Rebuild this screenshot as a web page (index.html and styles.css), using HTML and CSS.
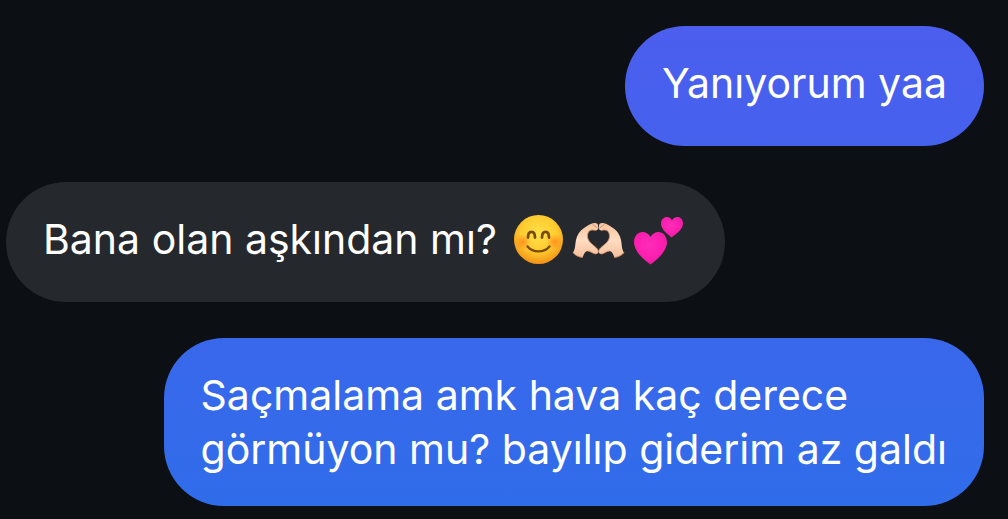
FILE: index.html
```html
<!DOCTYPE html>
<html lang="tr">
<head>
<meta charset="UTF-8">
<meta name="viewport" content="width=device-width, initial-scale=1.0">
<title>Chat</title>
<link rel="stylesheet" href="styles.css">
</head>
<body>
<main class="chat">
  <p class="bubble sent">Yanıyorum yaa</p>
  <p class="bubble received">Bana olan aşkından mı?
    <span class="emojis">
      <svg class="emoji" viewBox="0 2 60 56" role="img" aria-label="smiling face">
        <defs>
          <radialGradient id="face" cx="50%" cy="38%" r="62%">
            <stop offset="0" stop-color="#ffe04a"/>
            <stop offset="0.6" stop-color="#ffcb2e"/>
            <stop offset="1" stop-color="#f09216"/>
          </radialGradient>
          <radialGradient id="blush">
            <stop offset="0" stop-color="#ff7a1c" stop-opacity="0.7"/>
            <stop offset="1" stop-color="#ff7a1c" stop-opacity="0"/>
          </radialGradient>
        </defs>
        <circle cx="30.500" cy="29.500" r="24.500" fill="url(#face)"/>
        <circle cx="14.500" cy="32" r="8" fill="url(#blush)"/>
        <circle cx="46.500" cy="32" r="8" fill="url(#blush)"/>
        <path d="M20 27.500C20 20 27 20 27 27.500M34 27.500C34 20 41 20 41 27.500" fill="none" stroke="#7a4a08" stroke-width="2.800" stroke-linecap="round"/>
        <path d="M19.500 36.500C25 43 36 43 41.500 36.500" fill="none" stroke="#7a4a08" stroke-width="2.400" stroke-linecap="round"/>
      </svg><svg class="emoji" viewBox="0 2 60 56" role="img" aria-label="heart hands">
        <defs>
          <linearGradient id="skin" x1="0" y1="0" x2="0" y2="1">
            <stop offset="0" stop-color="#f6c4a0"/>
            <stop offset="0.5" stop-color="#ffdcc2"/>
            <stop offset="1" stop-color="#f5bf9b"/>
          </linearGradient>
          <g id="hand">
            <path d="M5 42.500C7.500 39 7 35 8 30C9 25 12 20.500 16 18C19 16 22 13.500 26 13C29 12.500 30.500 14.500 30 16.500C31 18.500 29.500 20.500 27.500 20.500C26 20 24 19.500 22 20.500C19.500 22 19 26 20 29C21.500 33 26 35.500 28.500 38C31 40 31 44 28 44C25 44 22.500 41 19.500 41C17 41 16 44 14.500 47.500C11 47 7 45.500 5 42.500Z" fill="url(#skin)"/>
            <path d="M27.500 20.500C26 20 24 19.500 22 20.500C19.500 22 19 26 20 29C21.500 33 26 35.500 28.500 38C30 39.500 30.500 41 30 42.500" fill="none" stroke="#d98b62" stroke-width="0.800"/>
            <path d="M24.500 14.500L29.500 18M5 42.500C7 45.500 11 47 14.500 47.500M19.500 41C22.500 41 25 44 28 44" fill="none" stroke="#d58c66" stroke-width="0.900"/>
          </g>
        </defs>
        <use href="#hand"/>
        <use href="#hand" transform="matrix(-1 0 0 1 61 0)"/>
      </svg><svg class="emoji" viewBox="0 2 60 56" role="img" aria-label="two hearts">
        <defs>
          <radialGradient id="pink" cx="45%" cy="40%" r="62%">
            <stop offset="0" stop-color="#ff2cba"/>
            <stop offset="0.7" stop-color="#fb1eae"/>
            <stop offset="1" stop-color="#e0209a"/>
          </radialGradient>
        </defs>
        <path d="M22.500 54.500C15 49 6 41 6 32C6 26 10 22 14.500 22C18 22 21 24 22.500 27C24 24 27 22 30.500 22C35 22 39 26 39 32C39 41 30 49 22.500 54.500Z" fill="url(#pink)"/>
        <path d="M43.500 27.500C39 24 33 19 33 13.500C33 9.500 36 7 39 7C41 7 43 8.500 44 10.500C45 8.500 47 7 49.500 7C52.500 7 55 9.500 55 13.500C55 19 48.500 24 43.500 27.500Z" fill="url(#pink)"/>
      </svg>
    </span>
  </p>
  <p class="bubble sent">Saçmalama amk hava kaç derece<br>görmüyon mu? bayılıp giderim az galdı</p>
</main>
</body>
</html>
```
FILE: styles.css
```css
body {
  margin: 0;
  background-color: #0c0f13;
  color: #fff;
  font-family: Inter, sans-serif;
  font-size: 41px;
  line-height: 54px;
}
.chat {
  display: flex;
  flex-direction: column;
  align-items: flex-start;
  gap: 36px;
  padding: 26px 24px 13px 6px;
}
.bubble {
  box-sizing: border-box;
  min-height: 120px;
  margin: 0;
  padding: 30px 37px;
  border-radius: 60px;
}
.sent {
  align-self: flex-end;
  background: linear-gradient(#4d5dee, #2f6dea) fixed;
}
.received {
  background-color: #25282d;
}
.emojis {
  display: inline-flex;
  vertical-align: top;
}
.emoji {
  width: 60px;
  height: 56px;
}
```
